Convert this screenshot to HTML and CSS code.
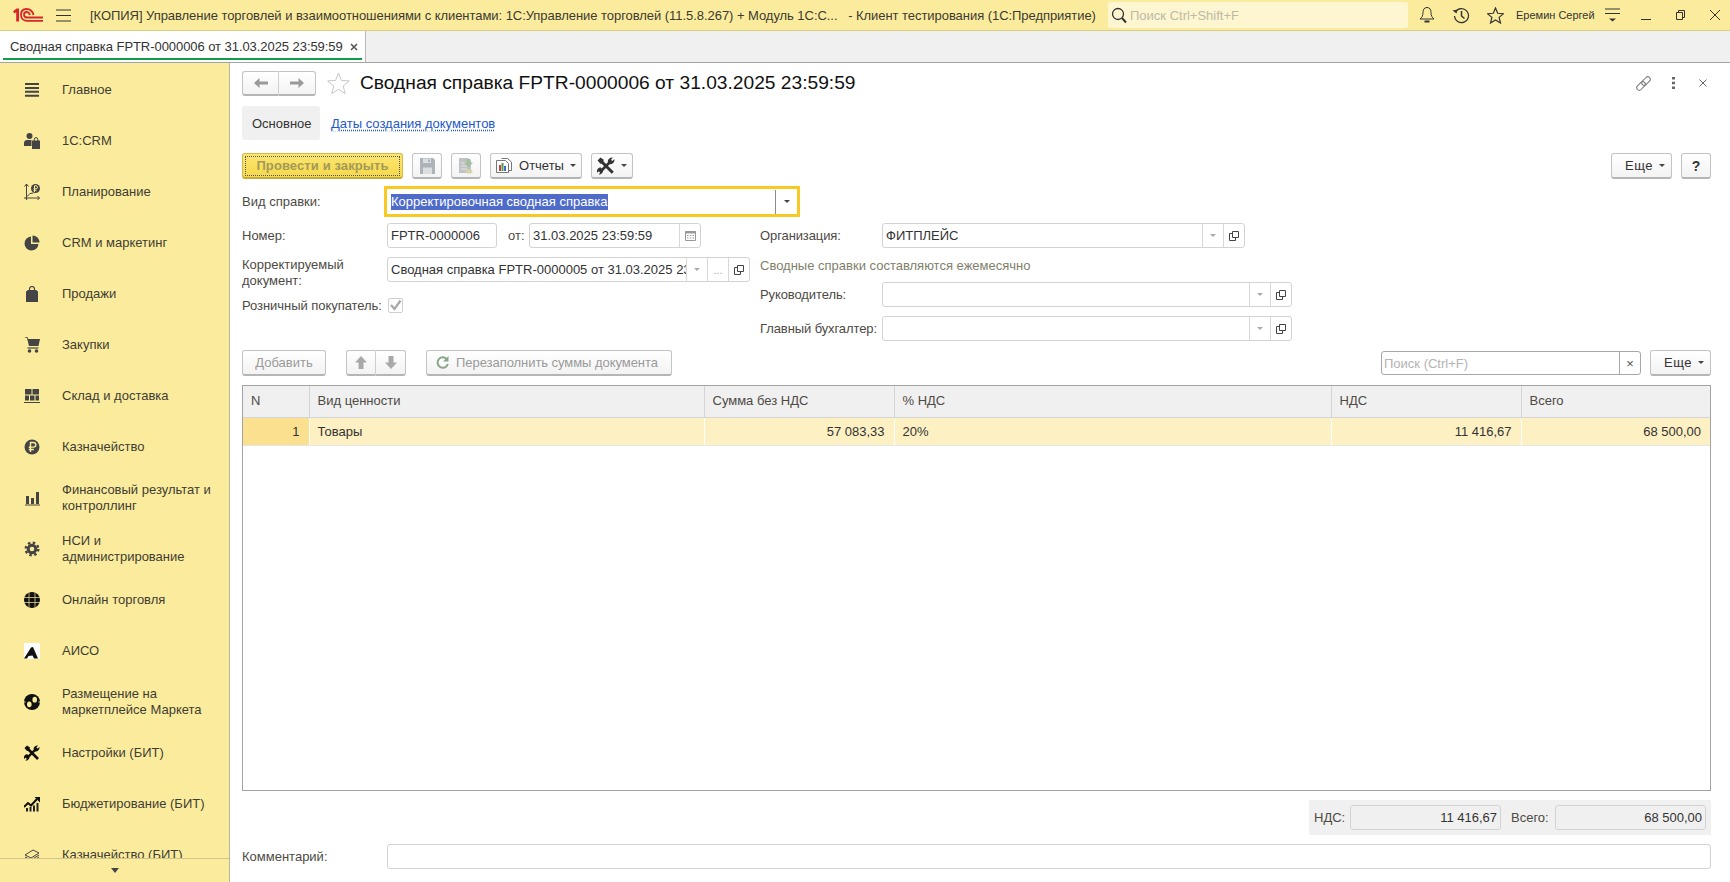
FILE: index.html
```html
<!DOCTYPE html>
<html lang="ru">
<head>
    <meta charset="utf-8">
    <title>Сводная справка FPTR-0000006</title>
    <link rel="stylesheet" href="styles.css">
</head>
<body>
    <svg class="defs" width="0" height="0">
        <symbol id="open" viewBox="0 0 12 12">
            <path d="M4.500 1.500h6v6h-6z M4.500 3.500h-3v7h6v-3" fill="none" stroke="#444" stroke-width="1"/>
        </symbol>
        <symbol id="tools" viewBox="0 0 16 16">
            <path d="M3 3l11 11" stroke="currentColor" stroke-width="2.600"/>
            <path d="M0.500 3L3 0.500l3 2-1 3-2 .5z" fill="currentColor"/>
            <path d="M13 3L2.500 13.500" stroke="currentColor" stroke-width="2.400"/>
            <path d="M9.500 4a4 4 0 0 1 4.500-3.500L12 3l1 1 2.500-2A4 4 0 0 1 11 6.500z" fill="currentColor"/>
            <path d="M5.500 11.500a4 4 0 0 1-4 4.300L3 13.500l-1-1L0 14a4 4 0 0 1 3-5z" fill="currentColor"/>
        </symbol>
    </svg>

    <div class="app">
        <header class="titlebar">
            <svg class="logo" width="30" height="14" viewBox="0 0 30 14">
                <path d="M0 3.500L3.500 .5H6v13H3.200V4L1.500 5.500z" fill="#d8262c"/>
                <path d="M20.500 7C19.500 3 16.500 1 13.500 1 10 1 8 3.500 8 7c0 3.500 2.500 5.800 6 5.800h16" fill="none" stroke="#d8262c" stroke-width="1.800"/>
                <path d="M17 7c-.7-2-2-3-3.500-3C12 4 11 5.200 11 6.800c0 1.700 1.300 2.700 3 2.700h16" fill="none" stroke="#d8262c" stroke-width="1.800"/>
            </svg>
            <svg class="burger" width="15" height="13" viewBox="0 0 15 13">
                <path d="M0 1h15M0 6.500h15M0 12h15" stroke="#333" stroke-width="1"/>
            </svg>
            <div class="app-title">[КОПИЯ] Управление торговлей и взаимоотношениями с клиентами: 1С:Управление торговлей (11.5.8.267) + Модуль 1С:С...&nbsp;&nbsp;&nbsp;- Клиент тестирования (1С:Предприятие)</div>
            <div class="global-search">
                <svg width="16" height="17" viewBox="0 0 16 17">
                    <circle cx="7" cy="7" r="5.500" fill="none" stroke="#333" stroke-width="1.300"/>
                    <path d="M11 11l4 4.500" stroke="#333" stroke-width="2"/>
                </svg>
                <span>Поиск Ctrl+Shift+F</span>
            </div>
            <svg class="tb-icon bell" width="16" height="18" viewBox="0 0 16 18">
                <path d="M8 1.500c-2.800 0-4 2-4 5 0 3-1 5-3 6.500h14c-2-1.500-3-3.500-3-6.500 0-3-1.200-5-4-5z" fill="none" stroke="#333"/>
                <path d="M5.500 15.500h5" stroke="#333" stroke-width="2"/>
            </svg>
            <svg class="tb-icon history" width="18" height="17" viewBox="0 0 18 17">
                <path d="M3.500 5a7 7 0 1 1-1 4" fill="none" stroke="#333" stroke-width="1.200"/>
                <path d="M0.500 3.500l4 3 1-4z" fill="#333"/>
                <path d="M9.500 4v5l3 2.500" fill="none" stroke="#333" stroke-width="1.500"/>
            </svg>
            <svg class="tb-icon fav" width="17" height="17" viewBox="0 0 17 17">
                <path d="M8.500 1l2.200 5.300 5.800.4-4.400 3.700 1.400 5.600-5-3-5 3 1.400-5.600L.5 6.700l5.800-.4z" fill="none" stroke="#333" stroke-width="1.200"/>
            </svg>
            <div class="user-name">Еремин Сергей</div>
            <svg class="tb-icon funcs" width="15" height="14" viewBox="0 0 15 14">
                <path d="M0 1h15M0 5.500h15" stroke="#333"/>
                <path d="M4 10.500h7L7.500 13.500z" fill="#333"/>
            </svg>
            <div class="win-btns">
                <svg width="10" height="10" viewBox="0 0 10 10"><path d="M0 9.500h10" stroke="#333"/></svg>
                <svg width="9" height="10" viewBox="0 0 9 10"><path d="M.5 2.500h6v7h-6z M2.500 2.500v-2h6v7h-2" fill="none" stroke="#333"/></svg>
                <svg width="10" height="10" viewBox="0 0 10 10"><path d="M0 0l10 10M10 0L0 10" stroke="#333"/></svg>
            </div>
        </header>

        <div class="tabbar">
            <div class="open-tab">
                <span class="open-tab-text">Сводная справка FPTR-0000006 от 31.03.2025 23:59:59</span>
                <svg width="8" height="8" viewBox="0 0 8 8"><path d="M1 1l6 6M7 1L1 7" stroke="#555" stroke-width="1.600"/></svg>
            </div>
        </div>

        <div class="workspace">
            <nav class="sidebar">
                <ul class="sections">
                    <li class="section">
                        <svg class="sec-icon" width="16" height="16" viewBox="0 0 16 16"><path d="M1 2h14M1 5.900h14M1 9.800h14M1 13.700h14" stroke="#444" stroke-width="2"/></svg>
                        <span>Главное</span>
                    </li>
                    <li class="section">
                        <svg class="sec-icon" width="16" height="16" viewBox="0 0 16 16"><circle cx="5.500" cy="3" r="3" fill="#444"/><path d="M0 13V10c0-2 1.500-3 3-3h5v6z" fill="#444"/><path d="M7.500 6h8.500v10H7.500z" fill="#fbec9d"/><path d="M8 7.500h8V16H8z" fill="#444"/><path d="M10.300 8V6.300a1.700 1.700 0 0 1 3.400 0V8" fill="none" stroke="#444"/></svg>
                        <span>1С:CRM</span>
                    </li>
                    <li class="section">
                        <svg class="sec-icon" width="16" height="16" viewBox="0 0 16 16"><path d="M2.500 0v16M.5 2.500L2.500 0l2 2.500M0 14h15.500M13.500 12l2 2-2 2" fill="none" stroke="#444"/><path d="M3 12.500l3-3 3.500-.5" fill="none" stroke="#444"/><circle cx="11.500" cy="4.500" r="4.500" fill="#444"/><path d="M10.500 8V1.800h1.500a1.500 1.500 0 0 1 0 3h-2.500M9.500 6.300h3" fill="none" stroke="#fbec9d"/></svg>
                        <span>Планирование</span>
                    </li>
                    <li class="section">
                        <svg class="sec-icon" width="16" height="16" viewBox="0 0 16 16"><path d="M7 1.500v7.500h7.500A7 7 0 1 1 7 1.500z" fill="#444"/><path d="M8.500 .5a7 7 0 0 1 7 7h-7z" fill="#444"/></svg>
                        <span>CRM и маркетинг</span>
                    </li>
                    <li class="section">
                        <svg class="sec-icon" width="16" height="16" viewBox="0 0 16 16"><path d="M2 5.500l2-1.500h8l2 1.500V16H2z" fill="#444"/><path d="M5.500 6.500V3a2.500 2.500 0 0 1 5 0v3.500" fill="none" stroke="#444" stroke-width="1.200"/></svg>
                        <span>Продажи</span>
                    </li>
                    <li class="section">
                        <svg class="sec-icon" width="16" height="16" viewBox="0 0 16 16"><path d="M0 0h3.500l.7 2H16l-1.500 7H5L3 1" fill="#444"/><path d="M3.500 11h11" stroke="#444" stroke-width="1.200"/><circle cx="5.500" cy="14" r="1.800" fill="#444"/><circle cx="12.500" cy="14" r="1.800" fill="#444"/></svg>
                        <span>Закупки</span>
                    </li>
                    <li class="section">
                        <svg class="sec-icon" width="16" height="16" viewBox="0 0 16 16"><path d="M1 1h6.500v5.500H1zM8.500 1H15v5.500H8.500zM1 7.500h4v5H1zM6 7.500h4.500v5H6zM11.500 7.500H15v5h-3.500z" fill="#444"/><path d="M0 14.500h16" stroke="#444"/></svg>
                        <span>Склад и доставка</span>
                    </li>
                    <li class="section">
                        <svg class="sec-icon" width="16" height="16" viewBox="0 0 16 16"><circle cx="8" cy="8" r="7.500" fill="#444"/><path d="M6.500 13V3.500h3a2.300 2.300 0 0 1 0 4.600h-3M4.800 8.200h2M4.800 10.500h5" fill="none" stroke="#fbec9d" stroke-width="1.400"/></svg>
                        <span>Казначейство</span>
                    </li>
                    <li class="section">
                        <svg class="sec-icon" width="16" height="16" viewBox="0 0 16 16"><path d="M2 6h3v8H2zM7 8h3v6H7zM12 2h3v12h-3z" fill="#444"/><path d="M1 15h15" stroke="#444"/></svg>
                        <span>Финансовый результат и контроллинг</span>
                    </li>
                    <li class="section">
                        <svg class="sec-icon" width="16" height="16" viewBox="0 0 16 16"><circle cx="8" cy="8" r="3.800" fill="none" stroke="#444" stroke-width="3"/><circle cx="8" cy="8" r="6.300" fill="none" stroke="#444" stroke-width="2.400" stroke-dasharray="2.470 2.480"/></svg>
                        <span>НСИ и администрирование</span>
                    </li>
                    <li class="section">
                        <svg class="sec-icon" width="16" height="16" viewBox="0 0 16 16"><circle cx="8" cy="8" r="8" fill="#111"/><path d="M0 5.500h16M0 10.500h16M5 0v16M11 0v16" stroke="#fbec9d" stroke-width=".7"/></svg>
                        <span>Онлайн торговля</span>
                    </li>
                    <li class="section">
                        <svg class="sec-icon" width="16" height="16" viewBox="0 0 16 16"><path d="M0 0h16v16H0z" fill="#fff"/><path d="M0 15.500L7 4.500l2-.5 5 11.500H10l-1.500-3-4 .5-1.500 2.500z" fill="#111"/></svg>
                        <span>АИСО</span>
                    </li>
                    <li class="section">
                        <svg class="sec-icon" width="16" height="16" viewBox="0 0 16 16"><circle cx="8" cy="8" r="8" fill="#111"/><ellipse cx="5.300" cy="10.300" rx="2.300" ry="2.900" fill="#fbec9d"/><ellipse cx="10.700" cy="5.700" rx="2.300" ry="2.900" fill="#fbec9d"/><path d="M0 8h1.500M14.500 8H16" stroke="#fbec9d"/></svg>
                        <span>Размещение на маркетплейсе Маркета</span>
                    </li>
                    <li class="section">
                        <svg class="sec-icon icon-black" width="16" height="16"><use href="#tools"/></svg>
                        <span>Настройки (БИТ)</span>
                    </li>
                    <li class="section">
                        <svg class="sec-icon" width="16" height="16" viewBox="0 0 16 16"><path d="M0 11l4-4 3 2.500 6-6.500" fill="none" stroke="#111" stroke-width="2"/><path d="M10.500 1H16v5.500z" fill="#111"/><path d="M2 15.500h2V12H2zM5.500 15.500h2V11h-2zM9 15.500h2V9.500H9zM12.500 15.500h2V7h-2z" fill="#222"/></svg>
                        <span>Бюджетирование (БИТ)</span>
                    </li>
                    <li class="section">
                        <svg class="sec-icon" width="16" height="16" viewBox="0 0 16 16"><path d="M1 8l8-5 6 3-8 5z M1 10l6 3 8-5M1 12l6 3 8-5" fill="none" stroke="#444"/></svg>
                        <span>Казначейство (БИТ)</span>
                    </li>
                </ul>
                <div class="sections-more"><i class="arrow-down"></i></div>
            </nav>

            <main class="form">
                <div class="form-head">
                    <div class="btn-group nav-group">
                        <button class="btn">
                            <svg width="14" height="10" viewBox="0 0 14 10"><path d="M5.500 0L0 5l5.500 5V6.500H14v-3H5.500z" fill="#9a9a9a"/></svg>
                        </button>
                        <button class="btn">
                            <svg width="14" height="10" viewBox="0 0 14 10"><path d="M8.500 0L14 5l-5.500 5V6.500H0v-3h8.500z" fill="#9a9a9a"/></svg>
                        </button>
                    </div>
                    <svg class="title-star" width="23" height="23" viewBox="0 0 24 24">
                        <path d="M12 1l3 7.800 8.300.5-6.400 5.200 2.100 8.100-7-4.500-7 4.500 2.100-8.100L.7 9.300 9 8.800z" fill="#fff" stroke="#c4c4c4"/>
                    </svg>
                    <h1 class="form-title">Сводная справка FPTR-0000006 от 31.03.2025 23:59:59</h1>
                    <div class="form-actions">
                        <svg width="17" height="17" viewBox="0 0 17 17">
                            <g transform="rotate(-45 8.500 8.500)" fill="none" stroke="#777">
                                <rect x="0" y="6" width="10" height="5" rx="2.500"/>
                                <rect x="7" y="6" width="10" height="5" rx="2.500"/>
                            </g>
                        </svg>
                        <svg class="dots-icon" width="3" height="12" viewBox="0 0 3 12"><path d="M0 0h3v2.500H0zM0 4.800h3v2.500H0zM0 9.500h3V12H0z" fill="#666"/></svg>
                        <svg width="8" height="8" viewBox="0 0 8 8"><path d="M.5.500l7 7M7.500.500l-7 7" stroke="#666"/></svg>
                    </div>
                </div>

                <div class="page-tabs">
                    <div class="page-tab active">Основное</div>
                    <a class="page-tab link">Даты создания документов</a>
                </div>

                <div class="commandbar">
                    <button class="btn btn-default">Провести и закрыть</button>
                    <button class="btn btn-icon" disabled>
                        <svg width="15" height="16" viewBox="0 0 15 16"><path d="M0 0h13l2 2v14H0z" fill="#adb3b8"/><path d="M3 0.500h8v4.500H3z" fill="#dcdfe1"/><path d="M3 9.500h9V16H3z" fill="#dcdfe1"/><path d="M8 1.500h2v2.500H8z" fill="#adb3b8"/></svg>
                    </button>
                    <button class="btn btn-icon" disabled>
                        <svg width="16" height="17" viewBox="0 0 16 17"><path d="M1 1h9l3 3v12H1z" fill="#bfc3c3"/><path d="M3 6h6M3 9h6M3 12h6" stroke="#e6e6e6"/><path d="M8.500 2h4v3.500H15l-4.500 5L6 5.500h2.500z" fill="#a3bf9e"/><ellipse cx="11" cy="14.500" rx="3.500" ry="2" fill="#d8d2a8"/></svg>
                    </button>
                    <button class="btn btn-menu">
                        <svg width="16" height="15" viewBox="0 0 16 15"><path d="M5.500 .5h6l4 3.500v8.500H13" fill="#fff" stroke="#777"/><path d="M.5 2.500h9l3 3v9H.5z" fill="#fff" stroke="#777"/><path d="M3 7h2v6H3z" fill="#d8383a"/><path d="M5.500 5h2v8h-2z" fill="#4a9d4e"/><path d="M8 8h2v5H8z" fill="#3b6fc9"/></svg>
                        <span>Отчеты</span><i class="arrow-down"></i>
                    </button>
                    <button class="btn btn-menu tools">
                        <svg class="icon-dark" width="18" height="18"><use href="#tools"/></svg>
                        <i class="arrow-down"></i>
                    </button>
                    <div class="spacer"></div>
                    <button class="btn btn-more">Еще<i class="arrow-down"></i></button>
                    <button class="btn btn-help">?</button>
                </div>

                <div class="kind-row">
                    <label class="field-label">Вид справки:</label>
                    <div class="kind-input">
                        <span class="selected-text">Корректировочная сводная справка</span>
                        <div class="kind-drop"><i class="arrow-down"></i></div>
                    </div>
                </div>

                <div class="columns">
                    <div class="col-left">
                        <div class="row">
                            <label class="field-label">Номер:</label>
                            <div class="input number-input">FPTR-0000006</div>
                            <label class="date-label">от:</label>
                            <div class="input date-input">
                                <span class="value">31.03.2025 23:59:59</span>
                                <div class="cell-btn cal">
                                    <svg width="11" height="11" viewBox="0 0 11 11"><path d="M.5 1.500h10v9H.5z" fill="none" stroke="#999"/><path d="M.5 1h10v2.500H.5z" fill="#999"/><path d="M2 5h1.500v1H2zM4.800 5h1.500v1H4.800zM7.600 5h1.500v1H7.600zM2 7.500h1.500v1H2zM4.800 7.500h1.500v1H4.800zM7.600 7.500h1.500v1H7.600z" fill="#999"/></svg>
                                </div>
                            </div>
                        </div>
                        <div class="row row-doc">
                            <label class="field-label two-lines">Корректируемый документ:</label>
                            <div class="input doc-input">
                                <span class="value">Сводная справка FPTR-0000005 от 31.03.2025 23:59:59</span>
                                <div class="cell-btn"><i class="arrow-down light"></i></div>
                                <div class="cell-btn dots">...</div>
                                <div class="cell-btn"><svg width="12" height="12"><use href="#open"/></svg></div>
                            </div>
                        </div>
                        <div class="row row-check">
                            <label class="check-label">Розничный покупатель:</label>
                            <div class="checkbox">
                                <svg width="13" height="13" viewBox="0 0 13 13"><path d="M2 6l3.500 4L11.500 1.500" fill="none" stroke="#a8a8a8" stroke-width="2.200"/></svg>
                            </div>
                        </div>
                    </div>

                    <div class="col-right">
                        <div class="row">
                            <label class="field-label right">Организация:</label>
                            <div class="input org-input">
                                <span class="value">ФИТПЛЕЙС</span>
                                <div class="cell-btn"><i class="arrow-down light"></i></div>
                                <div class="cell-btn"><svg width="12" height="12"><use href="#open"/></svg></div>
                            </div>
                        </div>
                        <div class="hint">Сводные справки составляются ежемесячно</div>
                        <div class="row row-boss">
                            <label class="field-label right">Руководитель:</label>
                            <div class="input person-input">
                                <span class="value"></span>
                                <div class="cell-btn"><i class="arrow-down light"></i></div>
                                <div class="cell-btn"><svg width="12" height="12"><use href="#open"/></svg></div>
                            </div>
                        </div>
                        <div class="row row-acc">
                            <label class="field-label right">Главный бухгалтер:</label>
                            <div class="input person-input">
                                <span class="value"></span>
                                <div class="cell-btn"><i class="arrow-down light"></i></div>
                                <div class="cell-btn"><svg width="12" height="12"><use href="#open"/></svg></div>
                            </div>
                        </div>
                    </div>
                </div>

                <div class="table-bar">
                    <button class="btn btn-off add-btn" disabled>Добавить</button>
                    <div class="btn-group arrows-group">
                        <button class="btn" disabled><svg width="12" height="13" viewBox="0 0 12 13"><path d="M6 0l6 6.500H8.500V13h-5V6.500H0z" fill="#a9a9a9"/></svg></button>
                        <button class="btn" disabled><svg width="12" height="13" viewBox="0 0 12 13"><path d="M6 13l6-6.500H8.500V0h-5v6.500H0z" fill="#a9a9a9"/></svg></button>
                    </div>
                    <button class="btn btn-off refill-btn" disabled>
                        <svg width="13" height="13" viewBox="0 0 13 13"><path d="M11 3.500A5.200 5.200 0 1 0 11.800 8" fill="none" stroke="#8aa68a" stroke-width="2"/><path d="M12.500 0v5.500H7z" fill="#8aa68a"/></svg>
                        <span>Перезаполнить суммы документа</span>
                    </button>
                    <div class="spacer"></div>
                    <div class="table-search">
                        <span class="placeholder">Поиск (Ctrl+F)</span>
                        <div class="cell-btn clear">×</div>
                    </div>
                    <button class="btn btn-more table-more">Еще<i class="arrow-down"></i></button>
                </div>

                <div class="table-wrap">
                    <table class="grid">
                        <colgroup>
                            <col class="c-n"><col class="c-kind"><col class="c-sum"><col class="c-rate"><col class="c-vat"><col class="c-total">
                        </colgroup>
                        <thead>
                            <tr>
                                <th>N</th>
                                <th>Вид ценности</th>
                                <th>Сумма без НДС</th>
                                <th>% НДС</th>
                                <th>НДС</th>
                                <th>Всего</th>
                            </tr>
                        </thead>
                        <tbody>
                            <tr>
                                <td class="num cur">1</td>
                                <td>Товары</td>
                                <td class="num">57 083,33</td>
                                <td>20%</td>
                                <td class="num">11 416,67</td>
                                <td class="num">68 500,00</td>
                            </tr>
                        </tbody>
                    </table>
                </div>

                <div class="totals-line">
                    <div class="totals">
                        <label>НДС:</label>
                        <div class="total-box">11 416,67</div>
                        <label class="total-second">Всего:</label>
                        <div class="total-box">68 500,00</div>
                    </div>
                </div>

                <div class="comment-row">
                    <label class="field-label">Комментарий:</label>
                    <div class="input comment-input"></div>
                </div>
            </main>
        </div>
    </div>
</body>
</html>
```

FILE: styles.css
```css
* {
    box-sizing: border-box;
}
html, body {
    margin: 0;
    height: 100%;
    overflow: hidden;
}
body {
    font-family: "Liberation Sans", Arial, sans-serif;
    font-size: 13px;
    color: #333;
    background: #fff;
}
.defs {
    position: absolute;
}
.app {
    display: flex;
    flex-direction: column;
    height: 882px;
}
button {
    font: inherit;
}
.icon-black {
    color: #111;
}
.icon-dark {
    color: #333;
}

/* title bar */
.titlebar {
    display: flex;
    align-items: center;
    height: 31px;
    flex: none;
    background: #fbec9d;
    border-bottom: 1px solid #d9cd84;
}
.logo {
    margin-left: 13px;
}
.burger {
    margin-left: 13px;
}
.app-title {
    margin-left: 19px;
    width: 1018px;
    white-space: nowrap;
    overflow: hidden;
    color: #3c3a32;
    letter-spacing: -.05px;
}
.global-search {
    display: flex;
    align-items: center;
    gap: 3px;
    width: 300px;
    height: 26px;
    padding-left: 3px;
    background: #fdf6d0;
    border-radius: 3px;
    color: #bdb9a6;
}
.tb-icon {
    flex: none;
}
.bell {
    margin-left: 11px;
}
.history {
    margin-left: 17px;
}
.fav {
    margin-left: 17px;
}
.user-name {
    margin-left: 12px;
    width: 80px;
    font-size: 11px;
    white-space: nowrap;
    color: #333;
}
.funcs {
    margin-left: 9px;
}
.win-btns {
    display: flex;
    align-items: center;
    margin-left: 21px;
    gap: 25px;
}

/* tab bar */
.tabbar {
    height: 32px;
    flex: none;
    background: #f0f0f0;
    border-bottom: 1px solid #a3a3a3;
}
.open-tab {
    display: flex;
    align-items: center;
    width: 366px;
    height: 31px;
    padding: 0 0 0 10px;
    background: #fff;
    border-right: 1px solid #b8b8b8;
    position: relative;
    white-space: nowrap;
}
.open-tab-text {
    letter-spacing: -.06px;
}
.open-tab svg {
    margin-left: 7px;
}
.open-tab::after {
    content: "";
    position: absolute;
    left: 3px;
    right: 3px;
    bottom: 2px;
    height: 2px;
    background: #119b4b;
}

.workspace {
    display: flex;
    flex: 1;
    min-height: 0;
}

/* sections panel */
.sidebar {
    display: flex;
    flex-direction: column;
    width: 230px;
    flex: none;
    background: #fbec9d;
    border-right: 1px solid #b5b5a0;
    overflow: hidden;
}
.sections {
    list-style: none;
    margin: 1px 0 0;
    padding: 0;
    flex: 1;
    min-height: 0;
    overflow: hidden;
}
.section {
    display: flex;
    align-items: center;
    height: 51px;
    padding-left: 24px;
    color: #3f3c33;
    line-height: 16px;
}
.sec-icon {
    flex: none;
    width: 16px;
    margin-right: 22px;
}
.section span {
    width: 160px;
}
.sections-more {
    display: flex;
    justify-content: center;
    align-items: center;
    height: 24px;
    flex: none;
    border-top: 1px solid #cfc48a;
    background: #fbec9d;
}
.sections-more .arrow-down {
    border-width: 5px 4.500px 0;
    border-top-color: #444;
    margin: 0;
}

.arrow-down {
    display: inline-block;
    width: 0;
    height: 0;
    margin-left: 6px;
    border-style: solid;
    border-width: 3px 3px 0;
    border-color: #444 transparent transparent;
}
.arrow-down.light {
    border-top-color: #aaa;
    margin: 0;
}

/* form */
.form {
    display: flex;
    flex-direction: column;
    flex: 1;
    min-width: 0;
    padding: 8px 19px 13px 12px;
}
.form-head {
    display: flex;
    align-items: center;
    height: 24px;
    flex: none;
}
.btn-group {
    display: flex;
    flex: none;
}
.btn {
    display: inline-flex;
    align-items: center;
    justify-content: center;
    height: 26px;
    padding: 0;
    color: #333;
    white-space: nowrap;
    background: linear-gradient(#fff, #f3f3f3);
    border: 1px solid #c4c4c4;
    border-bottom: 2px solid #b5b5b5;
    border-radius: 3px;
}
.btn-group .btn:first-child {
    border-radius: 3px 0 0 3px;
    border-right: 1px solid #cfcfcf;
}
.btn-group .btn:last-child {
    border-radius: 0 3px 3px 0;
    border-left: 0;
}
.nav-group .btn {
    width: 37px;
    height: 25px;
}
.title-star {
    margin-left: 11px;
}
.form-title {
    margin: 0 0 0 10px;
    font-size: 19.2px;
    font-weight: 400;
    color: #111;
    white-space: nowrap;
}
.form-actions {
    display: flex;
    align-items: center;
    margin-left: auto;
    margin-right: 4px;
}
.dots-icon {
    margin: 0 24px 0 20px;
}

.page-tabs {
    display: flex;
    align-items: center;
    height: 34px;
    margin-top: 11px;
    flex: none;
}
.page-tab {
    padding: 10px 11px 8px;
    line-height: 16px;
}
.page-tab.active {
    padding: 10px 0 8px 10px;
    background: #f0f0f0;
    border-radius: 3px;
    width: 78px;
}
.page-tab.link {
    color: #2358c7;
    text-decoration: underline dotted;
    text-underline-offset: 2px;
}

.commandbar {
    display: flex;
    align-items: center;
    height: 26px;
    margin-top: 13px;
    flex: none;
}
.btn-default {
    width: 161px;
    font-weight: 700;
    font-size: 13px;
    letter-spacing: .1px;
    color: #a39a58;
    background: linear-gradient(#fce673, #f5d94a);
    border: 1px solid #d3bb48;
    border-bottom: 2px solid #c4ac3c;
    outline: 1px dotted #555;
    outline-offset: -4px;
}
.btn-icon {
    width: 30px;
    margin-left: 9px;
}
.btn-menu {
    width: 92px;
    margin-left: 9px;
}
.btn-menu span {
    margin-left: 7px;
}
.btn-menu.tools {
    width: 42px;
}
.spacer {
    flex: 1;
}
.btn-more {
    justify-content: flex-start;
    width: 61px;
    padding-left: 13px;
    letter-spacing: .5px;
}
.btn-help {
    width: 30px;
    margin-left: 9px;
    font-size: 14px;
    font-weight: 700;
}

.kind-row {
    display: flex;
    align-items: center;
    height: 31px;
    margin-top: 7px;
    flex: none;
}
.field-label {
    flex: none;
    width: 142px;
    color: #4d4a44;
}
.kind-input {
    display: flex;
    align-items: center;
    width: 416px;
    height: 31px;
    padding-left: 4px;
    border: 3px solid #f9c823;
}
.selected-text {
    background: #4f6bc9;
    color: #fff;
    line-height: 16px;
}
.kind-drop {
    display: flex;
    align-items: center;
    margin-left: auto;
    width: 22px;
    height: 24px;
    padding-left: 8px;
    border-left: 1px solid #8c8c8c;
}
.kind-drop .arrow-down {
    margin: 0;
}

.columns {
    display: flex;
    margin-top: 6px;
    flex: none;
}
.col-left {
    width: 518px;
    flex: none;
}
.col-right {
    flex: 1;
}
.row {
    display: flex;
    align-items: center;
    height: 25px;
}
.input {
    display: flex;
    align-items: center;
    height: 25px;
    padding-left: 3px;
    background: #fff;
    border: 1px solid #d3d3d3;
    border-radius: 3px;
    white-space: nowrap;
    overflow: hidden;
}
.value {
    flex: 1;
    min-width: 0;
    overflow: hidden;
}
.cell-btn {
    display: flex;
    align-items: center;
    justify-content: center;
    flex: none;
    width: 21px;
    height: 100%;
    border-left: 1px solid #d8d8d8;
}
.number-input {
    width: 110px;
    margin-left: 3px;
}
.date-label {
    margin-left: 11px;
    width: 21px;
    color: #4d4a44;
}
.date-input {
    width: 172px;
}
.row-doc {
    margin-top: 9px;
    align-items: flex-start;
}
.two-lines {
    width: 120px;
    margin-right: 22px;
    line-height: 16px;
}
.doc-input {
    width: 363px;
    margin-left: 3px;
}
.dots {
    color: #aaa;
    font-size: 11px;
}
.row-check {
    margin-top: 12px;
    height: 23px;
}
.check-label {
    width: 146px;
    color: #4d4a44;
    white-space: nowrap;
    letter-spacing: -.05px;
}
.checkbox {
    display: flex;
    align-items: center;
    justify-content: center;
    width: 15px;
    height: 15px;
    border: 1px solid #cfcfcf;
    border-radius: 2px;
}
.right {
    width: 122px;
    white-space: nowrap;
    letter-spacing: -.1px;
}
.org-input {
    width: 363px;
}
.person-input {
    width: 410px;
}
.hint {
    height: 25px;
    margin-top: 9px;
    line-height: 18px;
    color: #7f7f6b;
}
.row-acc {
    margin-top: 9px;
}

.table-bar {
    display: flex;
    align-items: center;
    height: 26px;
    margin-top: 9px;
    flex: none;
}
.btn-off {
    color: #9a9a9a;
}
.add-btn {
    width: 84px;
}
.arrows-group {
    margin-left: 20px;
}
.arrows-group .btn {
    width: 30px;
}
.refill-btn {
    justify-content: flex-start;
    width: 246px;
    margin-left: 20px;
    padding-left: 9px;
    gap: 7px;
    letter-spacing: -.05px;
}
.table-search {
    display: flex;
    align-items: center;
    width: 260px;
    height: 24px;
    padding-left: 2px;
    border: 1px solid #a8a8a8;
    border-radius: 3px;
    color: #b3b3b3;
}
.placeholder {
    flex: 1;
}
.clear {
    color: #555;
    border-left-color: #a8a8a8;
}
.table-more {
    margin-left: 9px;
}

.table-wrap {
    flex: 1;
    min-height: 0;
    margin-top: 9px;
    border: 1px solid #a3a3a3;
}
.grid {
    width: 100%;
    border-collapse: collapse;
    table-layout: fixed;
}
.c-n { width: 66px; }
.c-kind { width: 395px; }
.c-sum { width: 190px; }
.c-rate { width: 437px; }
.c-vat { width: 190px; }
.grid th {
    height: 31px;
    padding: 0 9px 2px 8px;
    text-align: left;
    font-weight: 400;
    color: #4d4a44;
    background: #f0f0f0;
    border-right: 1px solid #d4d4d4;
    border-bottom: 1px solid #d4d4d4;
}
.grid td {
    height: 28px;
    padding: 0 9px 0 8px;
    background: #fdf0c2;
    border-right: 1px solid #fff;
    border-bottom: 1px solid #e6e6e6;
}
.grid td.num {
    text-align: right;
}
.grid td.cur {
    background: #fbe18f;
}
.grid th:last-child, .grid td:last-child {
    border-right: 0;
}

.totals-line {
    display: flex;
    justify-content: flex-end;
    margin-top: 9px;
    flex: none;
}
.totals {
    display: flex;
    align-items: center;
    height: 35px;
    width: 402px;
    padding: 0 5px;
    background: #f0f0f0;
    color: #4d4a44;
}
.totals label {
    width: 36px;
}
.totals .total-second {
    width: 44px;
    margin-left: 10px;
}
.total-box {
    flex: 1;
    height: 25px;
    line-height: 23px;
    padding-right: 3px;
    text-align: right;
    color: #333;
    border: 1px solid #d3d3d3;
    border-radius: 3px;
}

.comment-row {
    display: flex;
    align-items: center;
    margin-top: 9px;
    flex: none;
}
.comment-input {
    flex: 1;
    margin-left: 3px;
}
```
